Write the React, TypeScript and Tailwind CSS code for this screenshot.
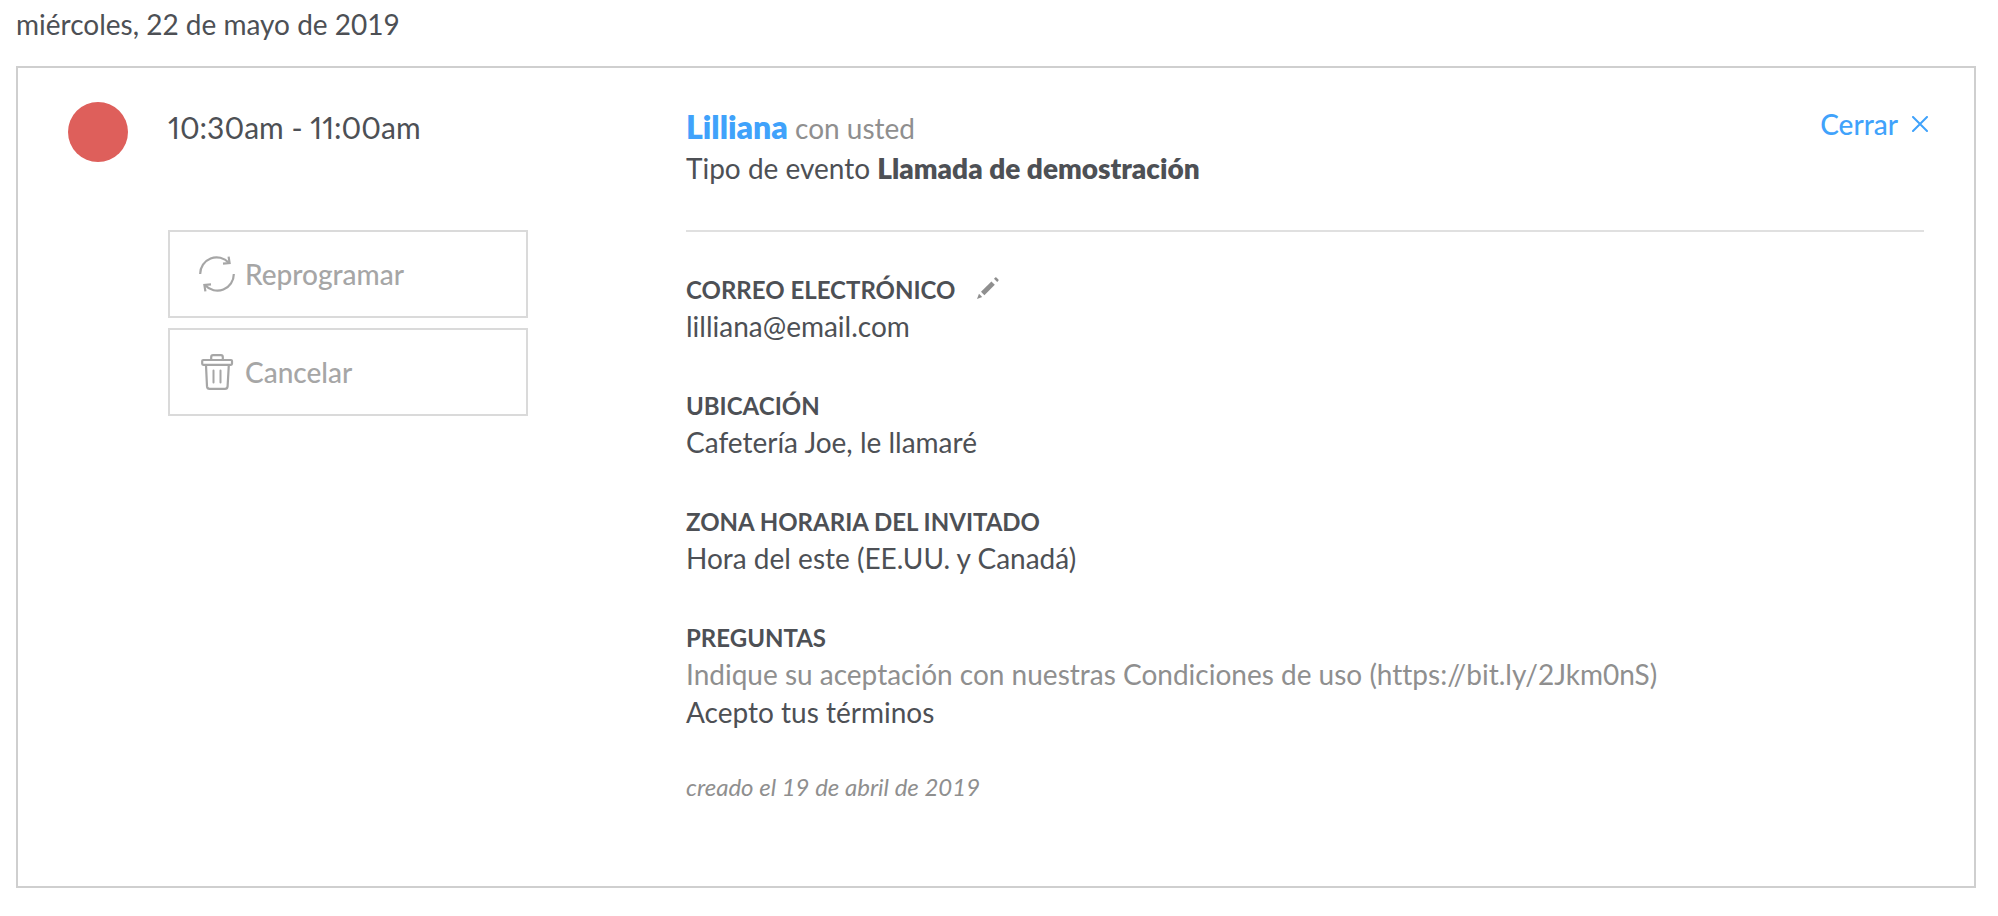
import type { ReactNode } from "react";

function RescheduleIcon() {
  return (
    <svg
      viewBox="0 0 36 36"
      className="h-9 w-9"
      fill="none"
      stroke="currentColor"
      strokeWidth="2.2"
      aria-hidden="true"
    >
      <path d="M1.2 18A16.4 16.4 0 0 1 29.8 6.8" />
      <path d="M29.6 0.6L30.6 7L24 7.6" />
      <path d="M34.8 18A16.4 16.4 0 0 1 6.2 29.2" />
      <path d="M6.4 35.4L5.4 29L12 28.4" />
    </svg>
  );
}

function TrashIcon() {
  return (
    <svg
      viewBox="0 0 36 36"
      className="h-9 w-9"
      fill="none"
      stroke="currentColor"
      strokeWidth="2.2"
      strokeLinecap="round"
      strokeLinejoin="round"
      aria-hidden="true"
    >
      <rect x="3.2" y="6" width="29.8" height="4.8" rx="1" />
      <path d="M12.2 5.6V3Q12.2 1.2 14 1.2H22Q23.8 1.2 23.8 3V5.6" />
      <path d="M7 11.4L8 32.4Q8.2 34.9 10.6 34.9H26Q28.4 34.9 28.6 32.4L29.8 11.4" />
      <path d="M14.5 16.6V28.4M21.5 16.6V28.4" strokeWidth="2" />
    </svg>
  );
}

function PencilIcon() {
  return (
    <svg
      viewBox="0 0 22 22"
      className="h-[22px] w-[22px]"
      fill="currentColor"
      aria-hidden="true"
    >
      <path d="M0 22L2 16.8L5.2 20Z" />
      <path d="M4 14.8L14.4 4.4L17.8 7.8L7.4 18.2Z" />
      <path d="M17 1.8L18.2 0.6Q18.8 0 19.4 0.6L21.4 2.6Q22 3.2 21.4 3.8L20.2 5Z" />
    </svg>
  );
}

function CloseIcon() {
  return (
    <svg
      viewBox="0 0 16 16"
      className="h-4 w-4"
      fill="none"
      stroke="currentColor"
      strokeWidth="2"
      strokeLinecap="round"
      aria-hidden="true"
    >
      <path d="M1 1L15 15M15 1L1 15" />
    </svg>
  );
}

function ActionButton({ icon, label }: { icon: ReactNode; label: string }) {
  return (
    <button
      type="button"
      className="flex h-[88px] w-full cursor-pointer items-center gap-2.5 border-2 border-[#dadada] px-[29px] text-[28px] leading-[38px] font-medium text-[#a6a6a6]"
    >
      {icon}
      {label}
    </button>
  );
}

type DetailProps = {
  title: string;
  action?: ReactNode;
  children: ReactNode;
};

function Detail({ title, action, children }: DetailProps) {
  return (
    <div>
      <dt className="flex items-center gap-[22px] text-2xl leading-[34px] font-bold uppercase">
        {title}
        {action}
      </dt>
      <dd className="text-[28px] leading-[38px]">{children}</dd>
    </div>
  );
}

export default function App() {
  return (
    <main className="bg-white px-4 pr-[22px] font-['Lato',sans-serif] text-[#4d5055] [font-variant-ligatures:none]">
      <h1 className="pt-[5px] text-[28px] leading-[38px]">
        miércoles, 22 de mayo de 2019
      </h1>

      {/* Event card */}
      <article className="mt-[23px] flex items-start border-2 border-[#cfcfcf] pt-[34px] pr-[50px] pb-[81px] pl-[50px]">
        <span className="h-[60px] w-[60px] shrink-0 rounded-full bg-[#de5f5b]" />

        {/* Time and actions */}
        <div className="ml-10 w-[360px] shrink-0">
          <p className="pt-1 text-3xl leading-[42px] proportional-nums">
            10:30am - 11:00am
          </p>
          <div className="mt-[82px] flex flex-col gap-2.5">
            <ActionButton icon={<RescheduleIcon />} label="Reprogramar" />
            <ActionButton icon={<TrashIcon />} label="Cancelar" />
          </div>
        </div>

        {/* Details */}
        <div className="ml-[158px] min-w-0 flex-1">
          <header className="flex items-start justify-between border-b-2 border-[#e0e0e0] pb-[43px]">
            <div className="pt-1 text-[28px] leading-[38px]">
              <p className="leading-[42px] text-[#8f8f8f]">
                <a
                  href="#lilliana"
                  className="text-[32px] font-extrabold text-[#40a2fb]"
                >
                  Lilliana
                </a>{" "}
                con usted
              </p>
              <p>
                Tipo de evento{" "}
                <strong className="font-extrabold">
                  Llamada de demostración
                </strong>
              </p>
            </div>
            <button
              type="button"
              className="-mr-1 flex cursor-pointer items-center gap-3.5 pt-[3px] text-[28px] leading-[38px] font-medium text-[#40a2fb]"
            >
              Cerrar
              <CloseIcon />
            </button>
          </header>

          <dl className="flex flex-col gap-11 pt-[41px]">
            <Detail
              title="Correo electrónico"
              action={
                <button
                  type="button"
                  aria-label="Editar correo electrónico"
                  className="cursor-pointer pb-1 text-[#8f8f8f]"
                >
                  <PencilIcon />
                </button>
              }
            >
              lilliana@email.com
            </Detail>
            <Detail title="Ubicación">Cafetería Joe, le llamaré</Detail>
            <Detail title="Zona horaria del invitado">
              Hora del este (EE.UU. y Canadá)
            </Detail>
            <Detail title="Preguntas">
              <p className="text-[#8f8f8f]">
                Indique su aceptación con nuestras Condiciones de uso
                (https://bit.ly/2Jkm0nS)
              </p>
              <p>Acepto tus términos</p>
            </Detail>
          </dl>

          <p className="mt-[38px] text-2xl leading-9 text-[#8f8f8f] italic">
            creado el 19 de abril de 2019
          </p>
        </div>
      </article>
    </main>
  );
}
